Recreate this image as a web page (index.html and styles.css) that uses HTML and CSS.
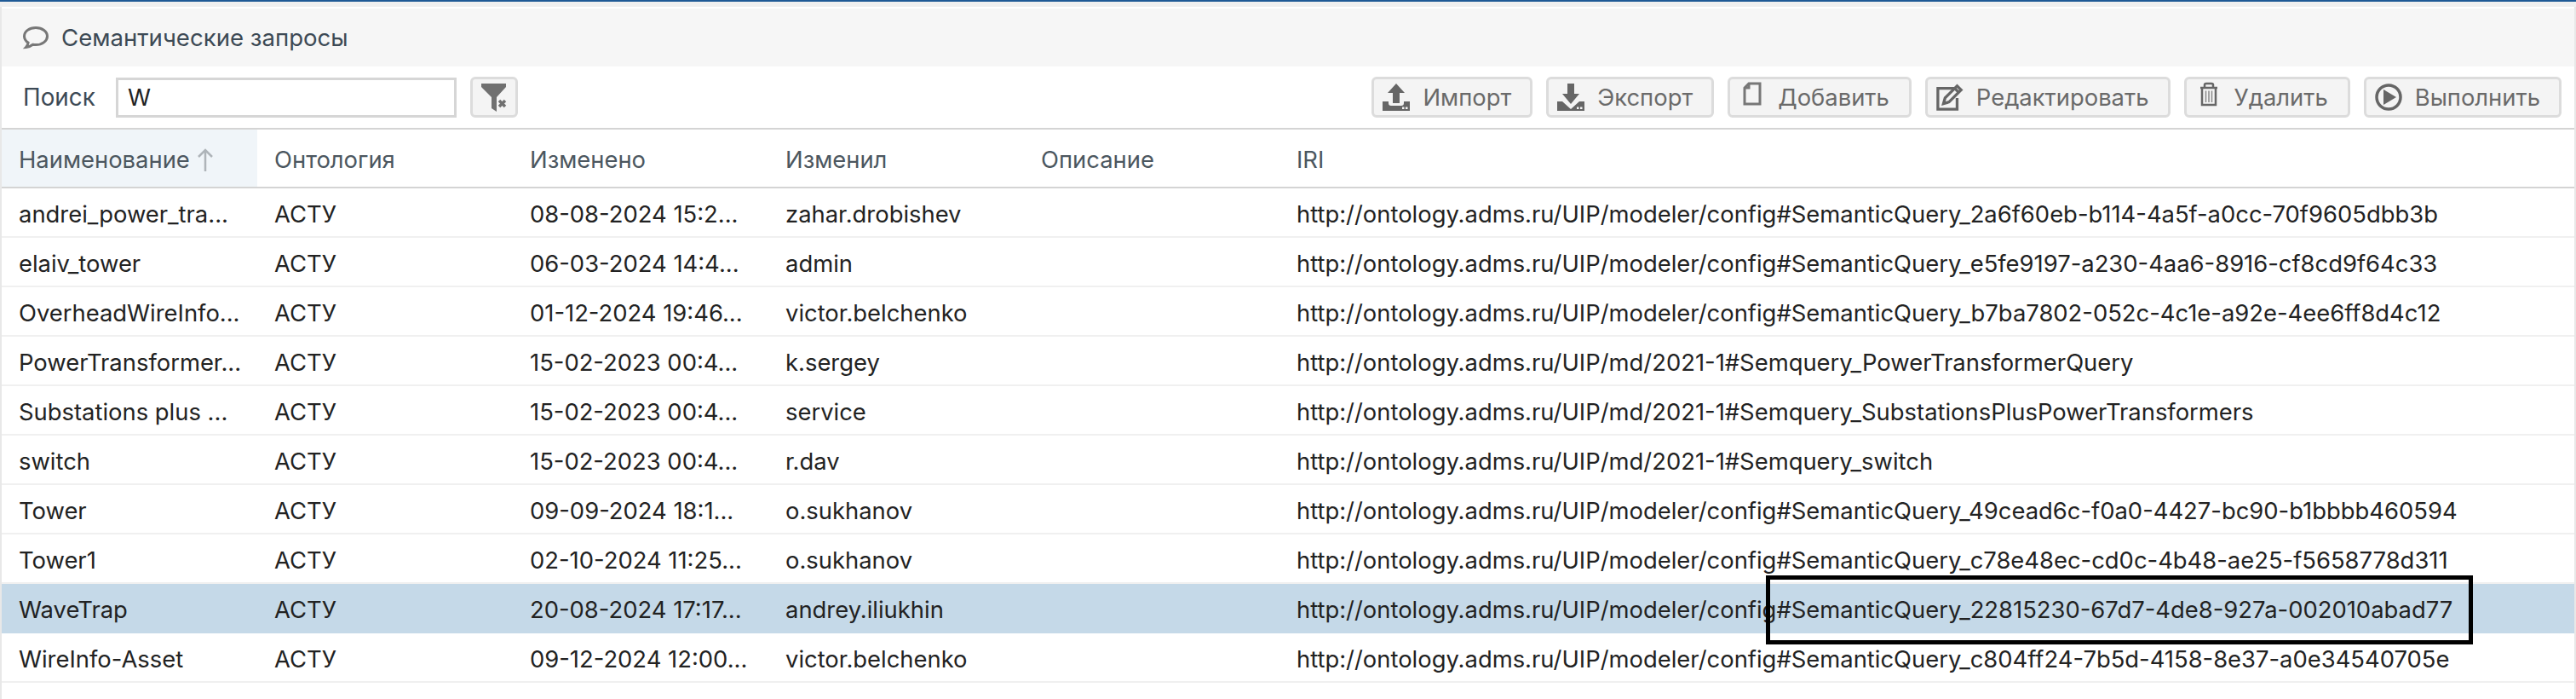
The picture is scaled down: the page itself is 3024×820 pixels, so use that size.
FILE: index.html
```html
<!DOCTYPE html>
<html lang="ru">
<head>
<meta charset="utf-8">
<title>Семантические запросы</title>
<link rel="stylesheet" href="styles.css">
</head>
<body>
<div class="topline"></div>
<main class="panel">
  <header class="titlebar">
    <svg class="title-icon" viewBox="0 0 32 28"><path d="M16 2.500C8.300 2.500 2.500 6.900 2.500 12.500c0 3.100 1.800 5.800 4.600 7.600-.2 1.800-1 3.600-2.600 5.400 3-.3 5.900-1.500 8.100-3.200 1.100.2 2.200.3 3.400.3 7.700 0 13.500-4.600 13.500-10.100S23.700 2.500 16 2.500z"/></svg>
    <span>Семантические запросы</span>
  </header>
  <div class="toolbar">
    <label class="search-label" for="q">Поиск</label>
    <input id="q" class="search-input" type="text" value="W">
    <button class="btn btn-icon" type="button" aria-label="Сбросить фильтр">
      <svg viewBox="0 0 32 34" class="ico-filter"><path d="M1 1h29v4L19 17v17l-6-4V17L1 5z"/><path class="x" d="M22 21l7 7M29 21l-7 7"/></svg>
    </button>
    <div class="actions">
      <button class="btn" type="button">
        <svg class="ico" viewBox="0 0 34 32"><path d="M17 0l10 11h-6v12h-8V11H7z"/><path d="M1 21h7v2c0 2 1 3 3 3h12c2 0 3-1 3-3v-2h7v11H1z"/><rect class="dot" x="24" y="27.500" width="2.500" height="2.500"/><rect class="dot" x="28" y="27.500" width="2.500" height="2.500"/></svg>
        <span>Импорт</span>
      </button>
      <button class="btn" type="button">
        <svg class="ico" viewBox="0 0 34 32"><path d="M13 0h8v12h6L17 24 7 12h6z"/><path d="M1 21h6l10 9 10-9h6v11H1z"/><rect class="dot" x="24" y="27.500" width="2.500" height="2.500"/><rect class="dot" x="28" y="27.500" width="2.500" height="2.500"/></svg>
        <span>Экспорт</span>
      </button>
      <button class="btn btn-wide" type="button">
        <svg class="ico ico-doc" viewBox="0 0 22 32"><path d="M7 3h13v24H2V8z"/><path d="M7 3v5H2"/></svg>
        <span>Добавить</span>
      </button>
      <button class="btn" type="button">
        <svg class="ico ico-line" viewBox="0 0 36 34"><path d="M24 6H3v26h24V18"/><path d="M10 25l2-7L27 3l5 5-15 15z"/><path d="M24 6l5 5"/></svg>
        <span>Редактировать</span>
      </button>
      <button class="btn btn-wide" type="button">
        <svg class="ico ico-trash" viewBox="0 0 22 32"><path class="lid" d="M1 8h20M6 7V4.500c0-1 1-1.500 2-1.500h6c1 0 2 .5 2 1.500V7"/><path class="lid" d="M3 8.500V28h16V8.500"/><path class="bars" d="M7.500 11.500V25M11 11.500V25M14.500 11.500V25"/></svg>
        <span>Удалить</span>
      </button>
      <button class="btn" type="button">
        <svg class="ico ico-play" viewBox="0 0 32 32"><circle cx="16" cy="16" r="14"/><path class="tri" d="M10 7l15 9-15 9z"/></svg>
        <span>Выполнить</span>
      </button>
    </div>
  </div>
  <div class="grid-wrap">
    <table class="grid">
      <colgroup>
        <col class="c"><col class="c"><col class="c"><col class="c"><col class="c"><col>
      </colgroup>
      <thead>
        <tr>
          <th class="sorted">Наименование<svg class="sort" viewBox="0 0 20 28"><path d="M10 27V2M2 10l8-8 8 8"/></svg></th>
          <th>Онтология</th><th>Изменено</th><th>Изменил</th><th>Описание</th><th>IRI</th>
        </tr>
      </thead>
      <tbody>
        <tr><td>andrei_power_tra...</td><td>АСТУ</td><td>08-08-2024 15:2...</td><td>zahar.drobishev</td><td></td><td>http://ontology.adms.ru/UIP/modeler/config#SemanticQuery_2a6f60eb-b114-4a5f-a0cc-70f9605dbb3b</td></tr>
        <tr><td>elaiv_tower</td><td>АСТУ</td><td>06-03-2024 14:4...</td><td>admin</td><td></td><td>http://ontology.adms.ru/UIP/modeler/config#SemanticQuery_e5fe9197-a230-4aa6-8916-cf8cd9f64c33</td></tr>
        <tr><td>OverheadWireInfo...</td><td>АСТУ</td><td>01-12-2024 19:46...</td><td>victor.belchenko</td><td></td><td>http://ontology.adms.ru/UIP/modeler/config#SemanticQuery_b7ba7802-052c-4c1e-a92e-4ee6ff8d4c12</td></tr>
        <tr><td>PowerTransformer...</td><td>АСТУ</td><td>15-02-2023 00:4...</td><td>k.sergey</td><td></td><td>http://ontology.adms.ru/UIP/md/2021-1#Semquery_PowerTransformerQuery</td></tr>
        <tr><td>Substations plus ...</td><td>АСТУ</td><td>15-02-2023 00:4...</td><td>service</td><td></td><td>http://ontology.adms.ru/UIP/md/2021-1#Semquery_SubstationsPlusPowerTransformers</td></tr>
        <tr><td>switch</td><td>АСТУ</td><td>15-02-2023 00:4...</td><td>r.dav</td><td></td><td>http://ontology.adms.ru/UIP/md/2021-1#Semquery_switch</td></tr>
        <tr><td>Tower</td><td>АСТУ</td><td>09-09-2024 18:1...</td><td>o.sukhanov</td><td></td><td>http://ontology.adms.ru/UIP/modeler/config#SemanticQuery_49cead6c-f0a0-4427-bc90-b1bbbb460594</td></tr>
        <tr><td>Tower1</td><td>АСТУ</td><td>02-10-2024 11:25...</td><td>o.sukhanov</td><td></td><td>http://ontology.adms.ru/UIP/modeler/config#SemanticQuery_c78e48ec-cd0c-4b48-ae25-f5658778d311</td></tr>
        <tr class="selected"><td>WaveTrap</td><td>АСТУ</td><td>20-08-2024 17:17...</td><td>andrey.iliukhin</td><td></td><td>http://ontology.adms.ru/UIP/modeler/config#SemanticQuery_22815230-67d7-4de8-927a-002010abad77</td></tr>
        <tr><td>WireInfo-Asset</td><td>АСТУ</td><td>09-12-2024 12:00...</td><td>victor.belchenko</td><td></td><td>http://ontology.adms.ru/UIP/modeler/config#SemanticQuery_c804ff24-7b5d-4158-8e37-a0e34540705e</td></tr>
      </tbody>
    </table>
    <div class="callout"></div>
  </div>
</main>
</body>
</html>
```
FILE: styles.css
```css
* { box-sizing: border-box; }
html, body { margin: 0; height: 100%; background: #fff; overflow: hidden; }
body { font-family: Inter, "Noto Sans", sans-serif; font-size: 27.4px; color: #222; display: flex; flex-direction: column; }
.topline { height: 8px; background: #f0f0f0; border-top: 2px solid #1f5a96; flex: none; }
.panel { flex: 1; padding-top: 2px; border-left: 2px solid #e8e8e8; border-right: 2px solid #e8e8e8; }
.titlebar { height: 68px; display: flex; align-items: center; gap: 14px; padding-left: 24px; background: #f6f6f6; color: #3d4a55; font-size: 27.6px; }
.title-icon { width: 32px; height: 28px; fill: none; stroke: #777; stroke-width: 3; }
.toolbar { height: 74px; display: flex; align-items: center; padding: 0 15px 0 25px; border-bottom: 2px solid #d4d4d4; }
.search-label { width: 109px; color: #3d4a55; font-size: 27.8px; }
.search-input { width: 400px; height: 47px; border: 3px solid #d6d6d6; padding: 0 11px; font: 27.4px Inter, sans-serif; color: #222; outline: none; }
.btn { height: 48px; display: inline-flex; align-items: center; gap: 14px; padding: 0 22px 0 9px; background: #f4f4f4; border: 3px solid #dcdcdc; border-radius: 6px; color: #6a6a6a; font: 27.4px Inter, sans-serif; }
.btn-icon { width: 56px; margin-left: 16px; padding: 0 0 0 9px; }
.btn-wide { gap: 19px; padding: 0 23px 0 15px; }
.actions { margin-left: auto; display: flex; gap: 16px; }
.ico { width: 34px; height: 32px; fill: #666; flex: none; }
.dot { fill: #f4f4f4; }
.ico-doc { width: 22px; fill: none; stroke: #777; stroke-width: 3; margin-top: -6px; }
.ico-line { fill: none; stroke: #666; stroke-width: 3.500; }
.ico-trash { width: 22px; fill: none; margin-top: -6px; }
.lid { stroke: #666; stroke-width: 2.500; }
.bars { stroke: #888; stroke-width: 1.500; }
.ico-play { fill: none; }
.ico-play circle { stroke: #666; stroke-width: 3.500; }
.tri { fill: #666; }
.ico-filter { width: 32px; height: 34px; fill: #707070; flex: none; }
.x { fill: none; stroke: #707070; stroke-width: 3.500; }
.grid-wrap { position: relative; }
.grid { width: 100%; border-collapse: collapse; table-layout: fixed; }
.c { width: 300px; }
th, td { padding: 2px 0 0 20px; text-align: left; font-weight: 400; white-space: nowrap; overflow: hidden; font-size: 27.4px; }
th { height: 68px; color: #4c5760; border-bottom: 2px solid #d4d4d4; }
th.sorted { background: #f0f5f9; }
.sort { width: 20px; height: 28px; margin-left: 8px; vertical-align: -5px; fill: none; stroke: #aeb4b9; stroke-width: 2.500; }
td { height: 58px; padding-top: 4px; border-bottom: 2px solid #f0f0f0; color: #222; }
.selected td { background: #c5d9e8; border-bottom-color: #c5d9e8; }
.callout { position: absolute; left: 2071px; top: 523px; width: 830px; height: 81px; border: 5px solid #000; pointer-events: none; }
```
